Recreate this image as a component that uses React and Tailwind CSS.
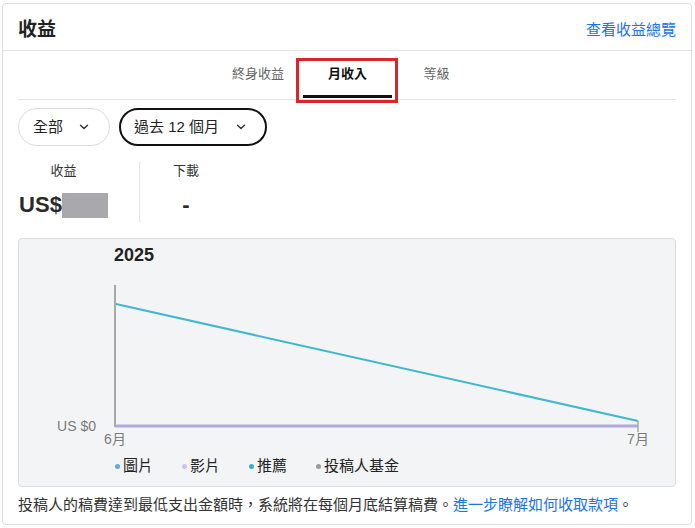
import React from "react";

const FONT = { fontFamily: '"Liberation Sans", Arial, "Noto Sans CJK TC", sans-serif' };

function Chevron() {
  return (
    <svg width="10" height="6" viewBox="0 0 10 6" fill="none" className="shrink-0">
      <path d="M1.5 1.2 L5 4.6 L8.5 1.2" stroke="#333" strokeWidth="1.4" strokeLinecap="round" strokeLinejoin="round" />
    </svg>
  );
}

function LegendItem({ color, label }) {
  return (
    <div className="flex items-center gap-[3px]">
      <span className="block w-[5px] h-[5px] rounded-full" style={{ backgroundColor: color }} />
      <span className="text-[15px] leading-[20px] text-[#222]">{label}</span>
    </div>
  );
}

export default function App() {
  return (
    <div className="w-[695px] h-[528px] bg-white pt-[3px] pl-[2px] pr-[3px]" style={FONT}>
      <div className="w-[690px] h-[522px] border border-[#dedede] rounded-[4px] bg-white flex flex-col">
        {/* Header */}
        <div className="h-[47px] border-b border-[#e3e3e3] flex items-center justify-between pl-[15px] pr-[15px] pt-[6px]">
          <span className="text-[19px] leading-[24px] font-bold text-[#222]">收益</span>
          <span className="text-[15px] leading-[20px] text-[#1a73e8]">查看收益總覽</span>
        </div>

        <div className="px-[15px] flex flex-col">
          {/* Tabs */}
          <div className="h-[49px] border-b border-[#e3e3e3] flex justify-center items-stretch text-[13px]">
            <div className="w-[90px] flex items-center justify-center text-[#666] pb-[2px]">終身收益</div>
            <div className="relative w-[89px] flex items-center justify-center font-bold text-[#111] pb-[2px]">
              月收入
              <span className="absolute left-0 right-0 bottom-[1px] h-[3px] bg-[#111]" />
              <span className="absolute -left-[7px] -right-[6px] top-[7px] -bottom-[4px] border-[3px] border-[#d9262b]" />
            </div>
            <div className="w-[89px] flex items-center justify-center text-[#666] pb-[2px]">等級</div>
          </div>

          {/* Dropdowns */}
          <div className="mt-[8px] flex gap-[9px]">
            <div className="h-[38px] w-[92px] rounded-full border border-[#dcdcdc] flex items-center pl-[14px] pr-[20px] justify-between">
              <span className="text-[15px] text-[#222]">全部</span>
              <Chevron />
            </div>
            <div className="h-[38px] w-[148px] rounded-full border-2 border-[#111] flex items-center pl-[13px] pr-[19px] justify-between">
              <span className="text-[15px] text-[#222]">過去 12 個月</span>
              <Chevron />
            </div>
          </div>

          {/* Stats */}
          <div className="mt-[16px] flex h-[60px]">
            <div className="w-[121px] flex flex-col items-start">
              <div className="w-[91px] flex flex-col items-center">
                <span className="text-[13px] leading-[18px] text-[#333]">收益</span>
                <div className="mt-[10px] flex items-center">
                  <span className="text-[22px] leading-[30px] font-bold text-[#2a2a2a]">US$</span>
                  <span className="block w-[46px] h-[25px] bg-[#a9a9ad]" />
                </div>
              </div>
            </div>
            <div className="w-px bg-[#e3e3e3]" />
            <div className="pl-[33px] flex flex-col items-center">
              <span className="text-[13px] leading-[18px] text-[#333]">下載</span>
              <span className="mt-[10px] text-[22px] leading-[30px] font-bold text-[#2a2a2a]">-</span>
            </div>
          </div>

          {/* Chart */}
          <div className="mt-[16px] h-[249px] border border-[#dcdcdc] rounded-[4px] bg-[#f3f4f6] flex flex-col">
            <div className="pt-[4px] pl-[95px] text-[18px] leading-[24px] font-bold text-[#222]">2025</div>
            <svg width="656" height="183" viewBox="0 0 656 183" className="block">
              <line x1="96" y1="18" x2="96" y2="160" stroke="#a8a8a8" strokeWidth="2" />
              <line x1="97" y1="37" x2="619" y2="154" stroke="#3fb8cc" strokeWidth="2" />
              <line x1="96" y1="159" x2="619" y2="159" stroke="#b2a9da" strokeWidth="3" />
              <line x1="619" y1="154" x2="619" y2="165" stroke="#a8a8a8" strokeWidth="1.5" />
              <text x="77" y="164" textAnchor="end" fontSize="14" fill="#7a7a7a" style={FONT}>US $0</text>
              <text x="96" y="177" textAnchor="middle" fontSize="14" fill="#7a7a7a" style={FONT}>6月</text>
              <text x="619" y="177" textAnchor="middle" fontSize="14" fill="#7a7a7a" style={FONT}>7月</text>
            </svg>
            <div className="mt-[6px] pl-[96px] flex gap-[29px]">
              <LegendItem color="#5aaae6" label="圖片" />
              <LegendItem color="#cbc2f0" label="影片" />
              <LegendItem color="#37b1c6" label="推薦" />
              <LegendItem color="#9a9a9a" label="投稿人基金" />
            </div>
          </div>

          {/* Footer */}
          <p className="mt-[8px] text-[15px] leading-[20px] text-[#333] whitespace-nowrap">
            投稿人的稿費達到最低支出金額時，系統將在每個月底結算稿費。<span className="text-[#1a73e8]">進一步瞭解如何收取款項</span>。
          </p>
        </div>
      </div>
    </div>
  );
}
